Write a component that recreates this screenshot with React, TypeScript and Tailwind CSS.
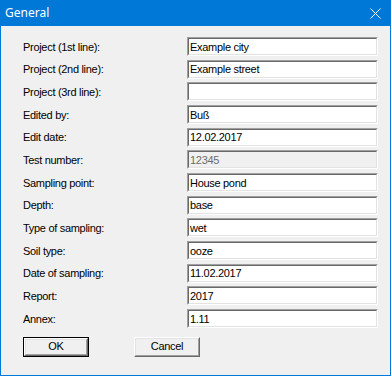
interface Field {
  label: string;
  value: string;
  disabled?: boolean;
}

const fields: Field[] = [
  { label: "Project (1st line):", value: "Example city" },
  { label: "Project (2nd line):", value: "Example street" },
  { label: "Project (3rd line):", value: "" },
  { label: "Edited by:", value: "Buß" },
  { label: "Edit date:", value: "12.02.2017" },
  { label: "Test number:", value: "12345", disabled: true },
  { label: "Sampling point:", value: "House pond" },
  { label: "Depth:", value: "base" },
  { label: "Type of sampling:", value: "wet" },
  { label: "Soil type:", value: "ooze" },
  { label: "Date of sampling:", value: "11.02.2017" },
  { label: "Report:", value: "2017" },
  { label: "Annex:", value: "1.11" },
];

const FieldRow = ({ label, value, disabled }: Field) => (
  <div className="flex h-[22.67px] items-start">
    <div className="w-[164px] h-[19px] flex items-center pt-px text-black">
      {label}
    </div>
    <div className="w-[191px] h-[19px] border border-t-[#a0a0a0] border-l-[#a0a0a0] border-b-white border-r-white">
      <div
        className={`h-full border border-t-[#696969] border-l-[#696969] border-b-[#e3e3e3] border-r-[#e3e3e3] flex items-center pl-px pt-px ${
          disabled ? "bg-[#f0f0f0] text-[#6d6d6d]" : "bg-white text-black"
        }`}
      >
        {value}
      </div>
    </div>
  </div>
);

const DialogButton = ({
  label,
  isDefault,
}: {
  label: string;
  isDefault?: boolean;
}) => (
  <div
    className={`w-[66px] h-[20px] ${
      isDefault ? "border border-black" : ""
    }`}
  >
    <div className="h-full border border-t-white border-l-white border-b-[#696969] border-r-[#696969]">
      <div className="h-full border border-t-[#e3e3e3] border-l-[#e3e3e3] border-b-[#a0a0a0] border-r-[#a0a0a0] bg-[#f0f0f0] flex items-center justify-center text-black">
        {label}
      </div>
    </div>
  </div>
);

const App = () => {
  return (
    <div
      className="w-[391px] h-[376px] flex flex-col bg-[#f0f0f0] border border-t-0 border-[#0078d7] text-[11px] tracking-[-0.3px]"
      style={{ fontFamily: '"Liberation Sans", Arial, sans-serif' }}
    >
      <div className="h-[26px] bg-[#0078d7] -mx-px flex items-center justify-between pl-[5px] pr-[10px]">
        <span
          className="text-white text-[12px] tracking-normal"
          style={{ fontFamily: '"Noto Sans", sans-serif' }}
        >
          General
        </span>
        <svg width="11" height="11" viewBox="0 0 11 11">
          <path d="M0.5 0.5 L10.5 10.5 M10.5 0.5 L0.5 10.5" stroke="white" strokeWidth="1" />
        </svg>
      </div>

      <div className="pl-[22px] pt-[11px]">
        {fields.map((f) => (
          <FieldRow key={f.label} {...f} />
        ))}
        <div className="flex gap-[45px] mt-[5px]">
          <DialogButton label="OK" isDefault />
          <DialogButton label="Cancel" />
        </div>
      </div>
    </div>
  );
};

export default App;
